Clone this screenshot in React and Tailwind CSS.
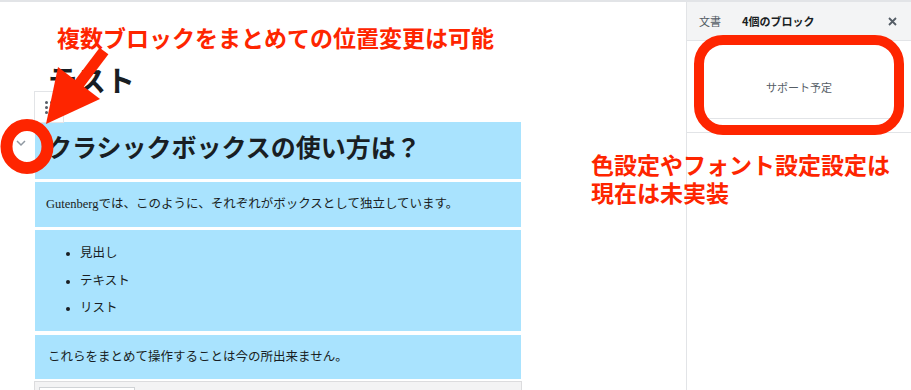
import React from "react";

const serif = { fontFamily: '"Liberation Serif", "Noto Sans CJK JP", serif' };
const sans = { fontFamily: '"Noto Sans CJK JP", "Noto Sans", sans-serif' };

const Overlay = () => (
  <svg
    className="absolute inset-0 pointer-events-none"
    width="911"
    height="390"
    viewBox="0 0 911 390"
  >
    {/* arrow */}
    <line x1="104" y1="49" x2="76" y2="86" stroke="#fe2500" strokeWidth="11" />
    <polygon points="58,65 100,97 46,122" fill="#fe2500" />
    {/* circle round the mover */}
    <ellipse cx="27" cy="144.5" rx="20.5" ry="21.5" fill="none" stroke="#fe2500" strokeWidth="12" />
    {/* sidebar box */}
    <rect x="699" y="38" width="200" height="90" rx="24" fill="none" stroke="#fe2500" strokeWidth="10" />
  </svg>
);

const Editor = () => (
  <div className="relative w-[687px] h-full border-r border-[#e2e4e7] pl-[35px] pt-[60px]" style={serif}>
    <div className="h-[40px] leading-[40px] text-[29px] font-bold pl-[13px] text-[#191e23]">テスト</div>

    {/* floating block toolbar */}
    <div className="absolute left-[34px] top-[89px] w-[30px] h-[32px] border border-[#e2e4e7] bg-white flex items-start justify-center pt-[9px]">
      <div className="grid grid-cols-2 gap-x-[2px] gap-y-[2px]">
        {[0, 1, 2, 3, 4, 5].map((i) => (
          <span key={i} className="w-[3px] h-[3px] rounded-full bg-[#555d66]" />
        ))}
      </div>
    </div>

    {/* mover chevron */}
    <svg className="absolute left-[16px] top-[137px]" width="10" height="8" viewBox="0 0 10 8">
      <path d="M1 2 L5 6 L9 2" fill="none" stroke="#8f98a1" strokeWidth="1.5" />
    </svg>

    <div className="w-[486px] mt-[20px] text-[#191e23]">
      <div className="h-[57px] bg-[#a9e3fe] flex items-center pl-[12px] pb-[4px] text-[25px] font-bold">
        クラシックボックスの使い方は？
      </div>
      <div className="h-[45px] mt-[3px] bg-[#a9e3fe] flex items-center pl-[11px] text-[12.5px]">
        Gutenbergでは、このように、それぞれがボックスとして独立しています。
      </div>
      <div className="h-[101px] mt-[3px] bg-[#a9e3fe] pt-[10px] text-[12.5px]">
        <ul className="list-disc pl-[45px]">
          <li className="leading-[27.5px]">見出し</li>
          <li className="leading-[27.5px]">テキスト</li>
          <li className="leading-[27.5px]">リスト</li>
        </ul>
      </div>
      <div className="h-[44px] mt-[4px] bg-[#a9e3fe] flex items-center pl-[13px] text-[12.5px]">
        これらをまとめて操作することは今の所出来ません。
      </div>
      <div className="h-[40px] mt-[2px] -ml-[1px] w-[488px] border border-[#dcdcde] bg-[#f3f3f4] pl-[4px] pt-[5px]">
        <div className="w-[96px] h-[24px] bg-white border border-[#d0d3d6]" />
      </div>
    </div>
  </div>
);

const Sidebar = () => (
  <div className="flex-1 h-full" style={sans}>
    <div className="h-[39px] bg-[#f3f4f5] border-b border-[#e2e4e7] flex items-center pl-[12px] pr-[14px] text-[11px]">
      <span className="text-[#555d66]">文書</span>
      <span className="ml-[21px] font-bold text-[#191e23]">4個のブロック</span>
      <span className="ml-auto">
        <svg width="9" height="9" viewBox="0 0 9 9">
          <path d="M1 1 L8 8 M8 1 L1 8" stroke="#555d66" strokeWidth="1.8" />
        </svg>
      </span>
    </div>
    <div className="px-[16px] pt-[16px] pb-[13px] border-b border-[#e2e4e7]">
      <div className="h-[62px] border-b border-[#e2e4e7] flex items-center justify-center text-[11px] text-[#555d66]">
        サポート予定
      </div>
    </div>
  </div>
);

export default function App() {
  return (
    <div className="relative w-[911px] h-[390px] overflow-hidden bg-white border-t-2 border-[#e2e4e7]">
      <div className="flex h-full">
        <Editor />
        <Sidebar />
      </div>

      <Overlay />

      <div
        className="absolute left-[57px] top-[21px] text-[23px] leading-[28px] font-bold text-[#fe2500]"
        style={sans}
      >
        複数ブロックをまとめての位置変更は可能
      </div>
      <div
        className="absolute left-[591px] top-[148px] text-[23px] leading-[28px] font-bold text-[#fe2500]"
        style={sans}
      >
        色設定やフォント設定設定は
        <br />
        現在は未実装
      </div>
    </div>
  );
}
